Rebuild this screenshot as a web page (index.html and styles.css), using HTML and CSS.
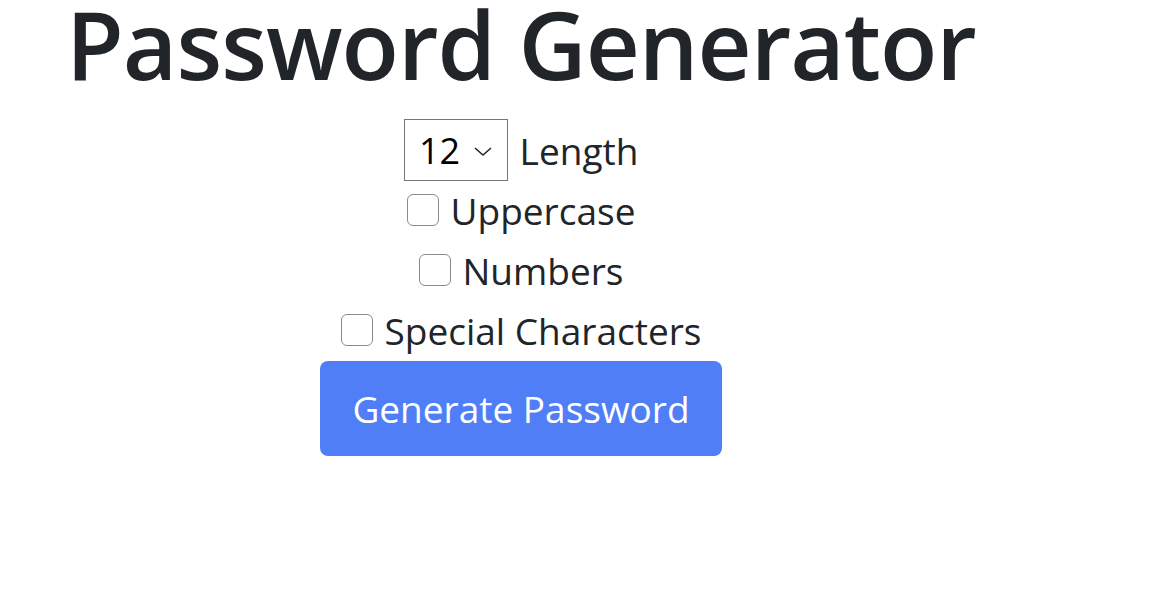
FILE: index.html
```html
<!DOCTYPE html>
<html lang="en">
<head>
<meta charset="utf-8">
<title>Password Generator</title>
<link rel="stylesheet" href="styles.css">
</head>
<body>
<main class="app">
  <h1 class="title">Password Generator</h1>
  <div class="row">
    <div class="select-box"><span class="select-value">12</span>
      <svg class="chev" width="18" height="9" viewBox="0 0 18 9"><path d="M1 1 L9 8 L17 1" fill="none" stroke="#222" stroke-width="1.5"/></svg>
    </div>
    <span class="label">Length</span>
  </div>
  <label class="row"><span class="check"></span><span class="label">Uppercase</span></label>
  <label class="row"><span class="check"></span><span class="label">Numbers</span></label>
  <label class="row"><span class="check"></span><span class="label">Special Characters</span></label>
  <button class="btn">Generate Password</button>
</main>
</body>
</html>
```
FILE: styles.css
```css
html, body { margin: 0; padding: 0; background: #fff; }
body { font-family: "Open Sans", "Noto Sans", sans-serif; color: #212529; }
.app { width: 1042px; display: flex; flex-direction: column; align-items: center; }
.title { margin: 0 0 32px 0; font-size: 94px; font-weight: 600; line-height: 88px; letter-spacing: -1px; }
.row { display: flex; align-items: center; gap: 12px; height: 60px; }
.label { font-size: 37px; }
.select-box { width: 102px; height: 60px; border: 1px solid #767676; display: flex; align-items: center; justify-content: center; gap: 14px; box-sizing: content-box; }
.select-value { font-size: 36px; color: #000; }
.chev { margin-top: 2px; }
.check { width: 30px; height: 30px; border: 1px solid #8a8a8a; border-radius: 6px; }
.btn { margin-top: 1px; width: 402px; height: 95px; background: #4f7ef7; color: #fff; border: none; border-radius: 8px; font-family: inherit; font-size: 37px; }
```
